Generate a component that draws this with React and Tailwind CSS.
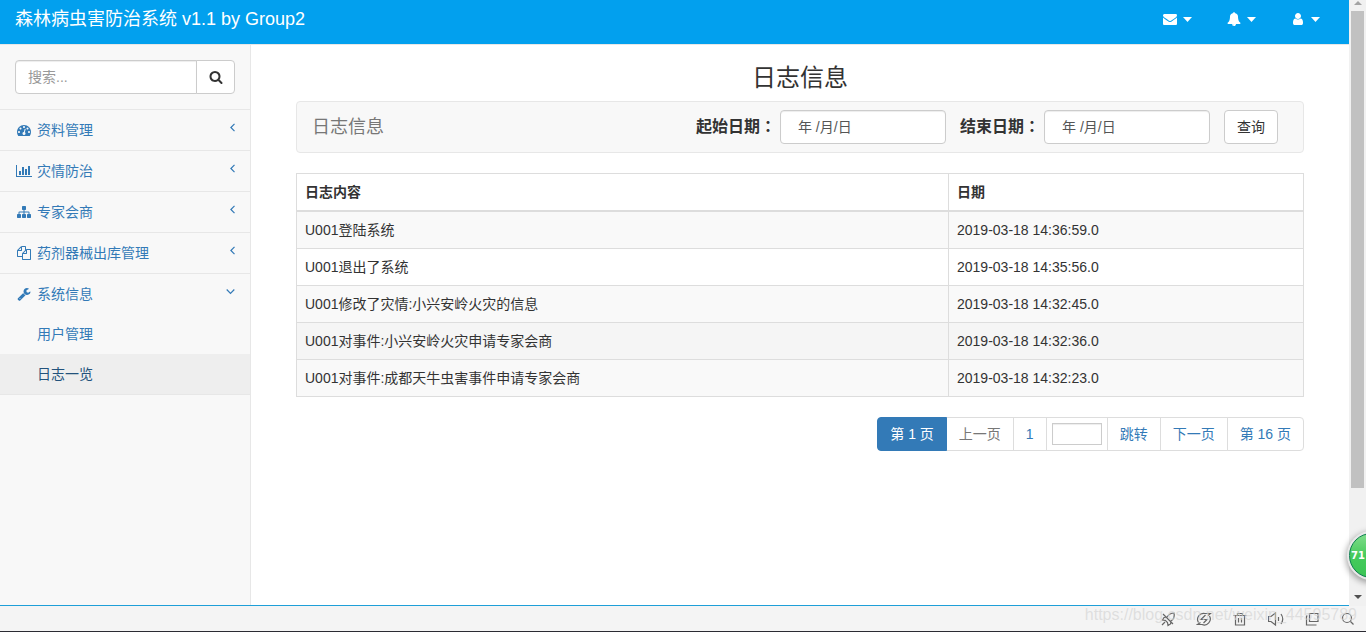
import React, { useState } from 'react';

const ICONS = {
    search: 'M1216 832q0-185-131.5-316.5t-316.5-131.5-316.5 131.5-131.5 316.5 131.5 316.5 316.5 131.5 316.5-131.5 131.5-316.5zm512 832q0 52-38 90t-90 38q-54 0-90-38l-343-342q-179 124-399 124-143 0-273.5-55.5t-225-150-150-225-55.5-273.5 55.5-273.5 150-225 225-150 273.5-55.5 273.5 55.5 225 150 150 225 55.5 273.5q0 220-124 399l343 343q37 37 37 90z',
    envelope: 'M1792 710v794q0 66-47 113t-113 47h-1472q-66 0-113-47t-47-113v-794q44 49 101 87 362 246 497 345 57 42 92.5 65.5t94.5 48 110 24.5h2q51 0 110-24.5t94.5-48 92.5-65.5q170-123 498-345 57-39 100-87zm0-294q0 79-49 151t-122 123q-376 261-468 325-10 7-42.5 31t-54 38.5-52 32.5-57.5 27-50 9h-2q-23 0-50-9t-57.5-27-52-32.5-54-38.5-42.5-31q-91-64-262-182.5t-205-142.5q-62-42-117-115.5t-55-136.5q0-78 41.5-130t118.5-52h1472q65 0 112.5 47t47.5 113z',
    bell: 'M912 1696q0-16-16-16-59 0-101.5-42.5t-42.5-101.5q0-16-16-16t-16 16q0 73 51.5 124.5t124.5 51.5q16 0 16-16zm816-288q0 52-38 90t-90 38h-448q0 106-75 181t-181 75-181-75-75-181h-448q-52 0-90-38t-38-90q50-42 91-88t85-119.5 74.5-158.5 50-206 19.5-260q0-152 117-282.5t307-158.5q-8-19-8-39 0-40 28-68t68-28 68 28 28 68q0 20-8 39 190 28 307 158.5t117 282.5q0 139 19.5 260t50 206 74.5 158.5 85 119.5 91 88z',
    user: 'M1536 1399q0 109-62.5 187t-150.5 78h-854q-88 0-150.5-78t-62.5-187q0-85 8.5-160.5t31.5-152 58.5-131 94-89 134.5-34.5q131 128 313 128t313-128q76 0 134.5 34.5t94 89 58.5 131 31.5 152 8.5 160.5zm-256-887q0 159-112.5 271.5t-271.5 112.5-271.5-112.5-112.5-271.5 112.5-271.5 271.5-112.5 271.5 112.5 112.5 271.5z',
    dashboard: 'M384 1152q0-53-37.5-90.5t-90.5-37.5-90.5 37.5-37.5 90.5 37.5 90.5 90.5 37.5 90.5-37.5 37.5-90.5zm192-448q0-53-37.5-90.5t-90.5-37.5-90.5 37.5-37.5 90.5 37.5 90.5 90.5 37.5 90.5-37.5 37.5-90.5zm428 481l101-382q6-26-7.5-48.5t-38.5-29.5-48 6.5-30 39.5l-101 382q-60 5-107 43.5t-63 98.5q-20 77 20 146t117 89 146-20 89-117q16-60-6-117t-72-91zm660-33q0-53-37.5-90.5t-90.5-37.5-90.5 37.5-37.5 90.5 37.5 90.5 90.5 37.5 90.5-37.5 37.5-90.5zm-640-640q0-53-37.5-90.5t-90.5-37.5-90.5 37.5-37.5 90.5 37.5 90.5 90.5 37.5 90.5-37.5 37.5-90.5zm448 192q0-53-37.5-90.5t-90.5-37.5-90.5 37.5-37.5 90.5 37.5 90.5 90.5 37.5 90.5-37.5 37.5-90.5zm320 448q0 261-141 483-19 29-54 29h-1402q-35 0-54-29-141-221-141-483 0-182 71-348t191-286 286-191 348-71 348 71 286 191 191 286 71 348z',
    chart: 'M640 896v512h-256v-512h256zm384-512v1024h-256v-1024h256zm1024 1152v128h-2048v-1536h128v1408h1920zm-640-896v768h-256v-768h256zm384-384v1152h-256v-1152h256z',
    sitemap: 'M1792 1248v320q0 40-28 68t-68 28h-320q-40 0-68-28t-28-68v-320q0-40 28-68t68-28h96v-192h-512v192h96q40 0 68 28t28 68v320q0 40-28 68t-68 28h-320q-40 0-68-28t-28-68v-320q0-40 28-68t68-28h96v-192h-512v192h96q40 0 68 28t28 68v320q0 40-28 68t-68 28h-320q-40 0-68-28t-28-68v-320q0-40 28-68t68-28h96v-192q0-52 38-90t90-38h512v-192h-96q-40 0-68-28t-28-68v-320q0-40 28-68t68-28h320q40 0 68 28t28 68v320q0 40-28 68t-68 28h-96v192h512q52 0 90 38t38 90v192h96q40 0 68 28t28 68z',
    files: 'M1696 384q40 0 68 28t28 68v1216q0 40-28 68t-68 28h-960q-40 0-68-28t-28-68v-288h-544q-40 0-68-28t-28-68v-672q0-40 20-88t48-76l408-408q28-28 76-48t88-20h416q40 0 68 28t28 68v328q68-40 128-40h416zm-544 213l-299 299h299v-299zm-640-384l-299 299h299v-299zm196 647l316-316v-416h-384v416q0 40-28 68t-68 28h-416v640h512v-256q0-40 20-88t48-76zm956 804v-1152h-384v416q0 40-28 68t-68 28h-416v640h896z',
    wrench: 'M448 1472q0-26-19-45t-45-19-45 19-19 45 19 45 45 19 45-19 19-45zm644-420l-682 682q-37 37-90 37-52 0-91-37l-106-108q-38-36-38-90 0-53 38-91l681-681q39 98 114.5 173.5t173.5 114.5zm634-435q0 39-23 106-47 134-164.5 217.5t-258.5 83.5q-185 0-316.5-131.5t-131.5-316.5 131.5-316.5 316.5-131.5q58 0 121.5 16.5t107.5 46.5q16 11 16 28t-16 28l-293 169v224l193 107q5-3 79-48.5t135.5-81 70.5-35.5q15 0 23.5 10t8.5 25z',
};

const menus = [
    { icon: 'dashboard', label: '资料管理' },
    { icon: 'chart', label: '灾情防治' },
    { icon: 'sitemap', label: '专家会商' },
    { icon: 'files', label: '药剂器械出库管理' },
    { icon: 'wrench', label: '系统信息', children: ['用户管理', '日志一览'] },
];

const logs = [
    { content: 'U001登陆系统', date: '2019-03-18 14:36:59.0' },
    { content: 'U001退出了系统', date: '2019-03-18 14:35:56.0' },
    { content: 'U001修改了灾情:小兴安岭火灾的信息', date: '2019-03-18 14:32:45.0' },
    { content: 'U001对事件:小兴安岭火灾申请专家会商', date: '2019-03-18 14:32:36.0', hover: true },
    { content: 'U001对事件:成都天牛虫害事件申请专家会商', date: '2019-03-18 14:32:23.0' },
];

function Icon({ name }) {
    const wide = name === 'chart';
    return (
        <svg
            viewBox={wide ? '0 0 2048 1792' : '0 0 1792 1792'}
            className={wide ? 'w-4 h-[14px]' : 'w-[14px] h-[14px]'}
            fill="currentColor"
            aria-hidden="true"
        >
            <path d={ICONS[name]} />
        </svg>
    );
}

function Header() {
    return (
        <header className="flex justify-between items-start h-[45px] bg-[#02a0ee] border-b border-[#e7e7e7] pl-[15px] pr-[29px] pt-[9px] text-white">
            <a href="#" className="text-lg leading-5">森林病虫害防治系统 v1.1 by Group2</a>
            <div className="flex gap-[33px]">
                {['envelope', 'bell', 'user'].map(name => (
                    <button key={name} aria-label={name} className="flex items-center gap-1 h-5">
                        <span className="w-[18px] flex justify-center"><Icon name={name} /></span>
                        <svg viewBox="0 0 9 5" className="w-[9px] h-[5px]" fill="currentColor"><path d="M0 0h9L4.5 5z" /></svg>
                    </button>
                ))}
            </div>
        </header>
    );
}

function Sidebar() {
    return (
        <aside className="w-[251px] shrink-0 bg-[#f8f8f8] border-r border-[#e7e7e7]">
            <div className="flex p-[15px] border-b border-[#e7e7e7]">
                <input
                    type="text"
                    aria-label="搜索"
                    placeholder="搜索..."
                    className="flex-1 min-w-0 h-[34px] px-3 bg-white border border-[#ccc] rounded-l shadow-[inset_0_1px_1px_rgba(0,0,0,0.075)] placeholder:text-[#999]"
                />
                <button aria-label="搜索" className="w-[39px] h-[34px] -ml-px flex items-center justify-center bg-white border border-[#ccc] rounded-r">
                    <Icon name="search" />
                </button>
            </div>
            <ul className="text-[#337ab7]">
                {menus.map(menu => (
                    <li key={menu.label} className="border-b border-[#e7e7e7]">
                        <a href="#" className="flex items-center gap-1 px-[15px] py-[10px]">
                            <span className="w-[18px] flex justify-center"><Icon name={menu.icon} /></span>
                            <span className="flex-1">{menu.label}</span>
                            <svg viewBox="0 0 9 9" className="w-[9px] h-[9px] self-start mt-[3px]" fill="none" stroke="currentColor" strokeWidth="1.2">
                                {menu.children ? <path d="M0.7 2.5l3.8 3.8 3.8-3.8" /> : <path d="M8.5 0.9L4.9 4.5l3.6 3.6" />}
                            </svg>
                        </a>
                        {menu.children && (
                            <ul>
                                {menu.children.map(child => (
                                    <li key={child}>
                                        <a
                                            href="#"
                                            className={child === '日志一览'
                                                ? 'block pl-[37px] py-[10px] bg-[#eee] text-[#23527c]'
                                                : 'block pl-[37px] py-[10px]'}
                                        >
                                            {child}
                                        </a>
                                    </li>
                                ))}
                            </ul>
                        )}
                    </li>
                ))}
            </ul>
        </aside>
    );
}

function DateField({ id, label }) {
    const [value, setValue] = useState('年 /月/日');
    return (
        <div className="flex items-center gap-1">
            <label htmlFor={id} className="text-base leading-5 font-bold pb-[2px]">
                {label}
                <span className="font-['Noto_Sans_CJK_TC',sans-serif]">：</span>
            </label>
            <input
                id={id}
                type="text"
                value={value}
                onChange={(e) => setValue(e.target.value)}
                className="w-[166px] h-[34px] px-[17px] pb-[2px] bg-white text-[#555] border border-[#ccc] rounded shadow-[inset_0_1px_1px_rgba(0,0,0,0.075)]"
            />
        </div>
    );
}

function LogTable() {
    return (
        <table className="w-full mb-5 border-collapse text-left">
            <thead>
                <tr>
                    <th className="p-2 border border-b-2 border-[#ddd] font-bold">日志内容</th>
                    <th className="w-[355px] p-2 border border-b-2 border-[#ddd] font-bold">日期</th>
                </tr>
            </thead>
            <tbody>
                {logs.map(log => (
                    <tr key={log.date} className={log.hover ? 'bg-[#f5f5f5]' : 'odd:bg-[#f9f9f9]'}>
                        <td className="p-2 border border-[#ddd]">{log.content}</td>
                        <td className="p-2 border border-[#ddd]">{log.date}</td>
                    </tr>
                ))}
            </tbody>
        </table>
    );
}

function Pagination() {
    const cell = 'h-[34px] -ml-px px-3 flex items-center bg-white border border-[#ddd]';
    return (
        <nav className="flex justify-end text-[#337ab7]">
            <a href="#" className="relative z-10 h-[34px] px-3 flex items-center bg-[#337ab7] border border-[#337ab7] rounded-l text-white">第 1 页</a>
            <a href="#" className={cell + ' text-[#777]'}>上一页</a>
            <a href="#" className={cell}>1</a>
            <div className="h-[34px] -ml-px px-[5px] flex items-center border border-[#ddd]">
                <input type="text" aria-label="页码" className="w-[50px] h-[22px] px-1 border border-[#ccc] shadow-[inset_0_1px_1px_rgba(0,0,0,0.075)]" />
            </div>
            <a href="#" className={cell}>跳转</a>
            <a href="#" className={cell}>下一页</a>
            <a href="#" className={cell + ' rounded-r'}>第 16 页</a>
        </nav>
    );
}

function Scrollbar() {
    return (
        <div className="w-[17px] shrink-0 flex flex-col items-center bg-[#f1f1f1]">
            <svg viewBox="0 0 8 4" className="w-2 h-1 mt-px mb-[6px] shrink-0" fill="#a3a3a3"><path d="M0 4h8L4 0z" /></svg>
            <div className="w-[13px] basis-[477px] bg-[#c1c1c1]" />
            <svg viewBox="0 0 8 4" className="w-2 h-1 mt-auto mb-[7px] shrink-0" fill="#505050"><path d="M0 0h8L4 4z" /></svg>
        </div>
    );
}

function StatusBar() {
    return (
        <footer className="relative h-[26px] shrink-0 flex items-center justify-end gap-5 pr-[10px] bg-[#f4f4f4] border-b border-b-[#2b2b33] text-[#666]">
            <svg viewBox="0 0 16 16" className="w-4 h-4" fill="none" stroke="currentColor" strokeWidth="1.2">
                <path d="M14 2c-3 0-5 1-7 4l-3 .5L2.5 9l3 .5 2 2L8 14.5l2.5-1.5.5-3c3-2 4-4 3-8zM5 11l-3 3M3 3l10 10" />
            </svg>
            <svg viewBox="0 0 16 16" className="w-4 h-4" fill="none" stroke="currentColor" strokeWidth="1.2">
                <path d="M2.5 11.5A6 6 0 0 1 9 2.500h5.5l-2.5 2M13.5 5A6 6 0 0 1 6 13.5H1.5l3-2M9.5 4L5 8.500h6L7.5 12" />
            </svg>
            <svg viewBox="0 0 16 16" className="w-4 h-4" fill="none" stroke="currentColor" strokeWidth="1.2">
                <path d="M1.5 4.5h13M5.5 4V2.5h5V4M3.5 4.500v9.500h9V4.5M6.5 7v4.5M9.5 7v4.5" />
            </svg>
            <svg viewBox="0 0 16 16" className="w-4 h-4" fill="none" stroke="currentColor" strokeWidth="1.2">
                <path d="M0.5 5.5h2.5L7.5 2v12L3 10.5H0.5zM10.5 6v4M13 3q3.5 5 0 10" />
            </svg>
            <svg viewBox="0 0 16 16" className="w-4 h-4" fill="none" stroke="currentColor" strokeWidth="1.2">
                <path d="M5.5 2.5h8.5v8H5.5zM2.5 4.500v9.500h10M2 5h1.5" />
            </svg>
            <svg viewBox="0 0 16 16" className="w-4 h-4" fill="none" stroke="currentColor" strokeWidth="1.2">
                <circle cx="7" cy="7" r="4.5" />
                <path d="M10.5 10.5l3 3" />
            </svg>
            <span className="absolute right-[9px] -top-px text-base leading-5 text-[#d4d4d4]/70 whitespace-nowrap">
                https://blog.csdn.net/weixin_44595789
            </span>
        </footer>
    );
}

export default function App() {
    return (
        <div className="relative h-screen flex flex-col overflow-hidden bg-white text-sm leading-5 text-[#333] font-['Liberation_Sans','Noto_Sans_CJK_SC',sans-serif]">
            <div className="flex-1 min-h-0 flex">
                <div className="flex-1 min-w-0 flex flex-col border-b border-[#1e9fd8]">
                    <Header />
                    <div className="flex-1 flex">
                        <Sidebar />
                        <main className="flex-1 px-[45px] pt-5">
                            <h3 className="mb-[10px] text-center text-2xl leading-[26px] font-normal">日志信息</h3>
                            <div className="h-[52px] mb-5 pl-[15px] pr-[25px] flex items-center justify-between bg-[#f8f8f8] border border-[#e7e7e7] rounded">
                                <span className="text-lg leading-5 text-[#777]">日志信息</span>
                                <form className="flex items-center gap-[14px]" onSubmit={(e) => e.preventDefault()}>
                                    <DateField id="startDate" label="起始日期" />
                                    <DateField id="endDate" label="结束日期" />
                                    <button type="submit" className="h-[34px] px-3 bg-white border border-[#ccc] rounded">查询</button>
                                </form>
                            </div>
                            <LogTable />
                            <Pagination />
                        </main>
                    </div>
                </div>
                <Scrollbar />
            </div>
            <StatusBar />
            <div className="absolute -right-7 bottom-[54px] w-[45px] h-[45px] rounded-full bg-linear-to-b from-[#7fdc8b] via-[#45cb5c] to-[#3cc455] border border-[#0d8050] ring-2 ring-[#e8e8e8] shadow-[0_2px_6px_3px_rgba(0,0,0,0.35)] flex items-center pl-px font-['DejaVu_Sans',sans-serif] text-[10px] font-bold text-white">
                71
            </div>
        </div>
    );
}
